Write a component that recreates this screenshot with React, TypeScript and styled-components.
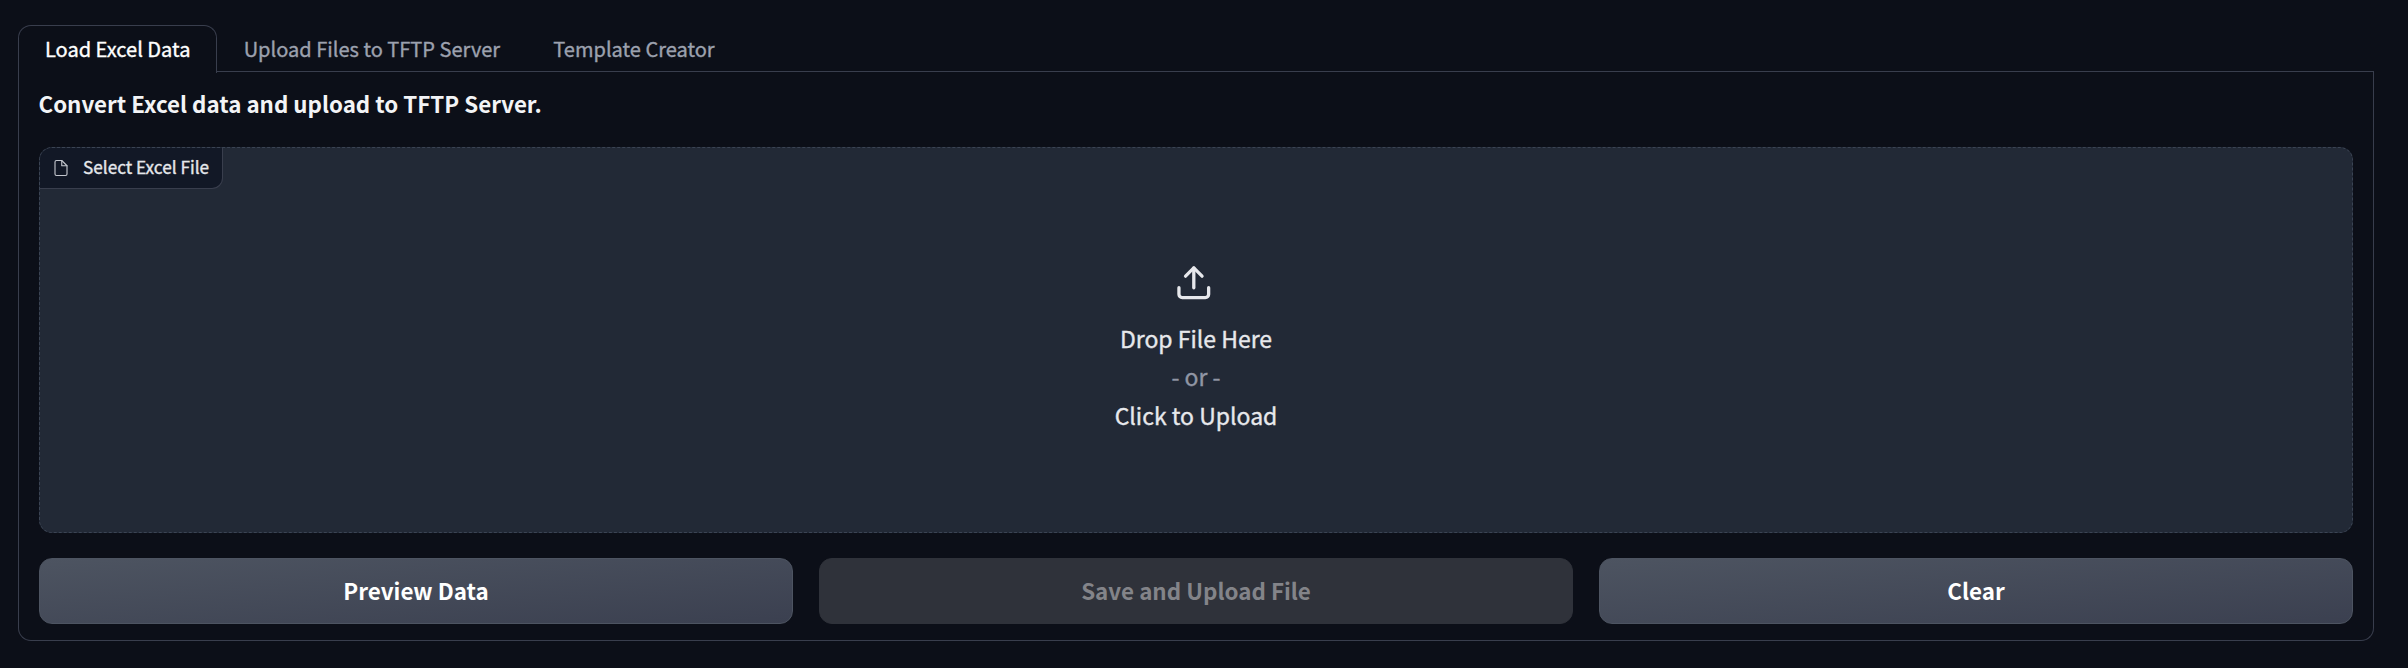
import React from "react";
import styled, { createGlobalStyle } from "styled-components";

const line = "#393e4d";

const Global = createGlobalStyle`
  * { box-sizing: border-box; }
  body {
    margin: 0;
    background: #0c0f18;
    font-family: "Noto Sans CJK SC", "Noto Sans", sans-serif;
    color: #f3f4f6;
  }
`;

const Page = styled.main`
  padding: 25px 34px 27px 18px;
  height: 668px;
  display: flex;
  flex-direction: column;
`;

const TabBar = styled.nav`
  display: flex;
  height: 47px;
  flex: none;
  border-bottom: 1px solid ${line};
`;

const Tab = styled.button<{ $active?: boolean }>`
  height: ${(p) => (p.$active ? 48 : 46)}px;
  padding: ${(p) => (p.$active ? "0 26px 2px" : "0 26px 0 25.2px")};
  border: 1px solid ${(p) => (p.$active ? line : "transparent")};
  border-bottom: 0;
  border-radius: 13px 13px 0 0;
  background: ${(p) => (p.$active ? "#0c0f18" : "transparent")};
  color: ${(p) => (p.$active ? "#ffffff" : "#9ca1ae")};
  font: 400 20.05px/30px "Noto Sans CJK SC", sans-serif;
  -webkit-text-stroke: 0.35px currentColor;
  white-space: nowrap;
`;

const Panel = styled.section`
  flex: 1;
  display: flex;
  flex-direction: column;
  padding: 15px 20px 16px;
  border: 1px solid ${line};
  border-top: 0;
  border-radius: 0 0 13px 13px;
`;

const Heading = styled.h1`
  margin: 0 0 27px;
  height: 33px;
  font-size: 22.34px;
  line-height: 33px;
  font-weight: 700;
  text-indent: -0.5px;
`;

const DropZone = styled.div`
  height: 386px;
  flex: none;
  display: flex;
  flex-direction: column;
  align-items: center;
  border: 1px dashed #3b4454;
  border-radius: 13px;
  background: #222936;
  overflow: hidden;
`;

const Label = styled.label`
  align-self: flex-start;
  display: flex;
  align-items: center;
  height: 41px;
  padding: 0 13px 0 12px;
  border: solid ${line};
  border-width: 0 1px 1px 0;
  border-bottom-right-radius: 11px;
  background: #121826;
  color: #e5e7eb;
  font-size: 17.2px;
  line-height: 24px;
  -webkit-text-stroke: 0.35px currentColor;
`;

const LabelText = styled.span`
  margin-left: 13px;
  padding-bottom: 3px;
`;

const Prompt = styled.div`
  display: flex;
  flex-direction: column;
  align-items: center;
  margin-top: 74.4px;
  color: #e7e8ec;
  font-size: 23px;
  line-height: 38.5px;
  -webkit-text-stroke: 0.35px currentColor;
`;

const UploadIcon = styled.svg`
  margin: 0 5px 16px 0;
`;

const Or = styled.span`
  color: #9196a5;
`;

const Actions = styled.div`
  display: grid;
  grid-template-columns: repeat(3, 1fr);
  gap: 26px;
  margin-top: 25px;
`;

const Action = styled.button`
  height: 66px;
  padding: 0 0 2px;
  border: 1px solid #4d5461;
  border-radius: 13px;
  background: linear-gradient(to bottom right, #4d5461, #3b4050);
  color: #ffffff;
  font: 700 22.4px/34px "Noto Sans CJK SC", sans-serif;

  &:disabled {
    border-color: #2f323a;
    background: #2f323a;
    color: #838489;
  }
`;

export default function App() {
  return (
    <Page>
      <Global />
      <TabBar>
        <Tab $active>Load Excel Data</Tab>
        <Tab>Upload Files to TFTP Server</Tab>
        <Tab>Template Creator</Tab>
      </TabBar>
      <Panel>
        <Heading>Convert Excel data and upload to TFTP Server.</Heading>
        <DropZone>
          <Label>
            <svg width="18" height="18" viewBox="0 0 24 24" fill="none" stroke="#c4c7ce" strokeWidth="1.5" strokeLinecap="round" strokeLinejoin="round">
              <path d="M13 2H6a2 2 0 0 0-2 2v16a2 2 0 0 0 2 2h12a2 2 0 0 0 2-2V9z" />
              <path d="M13 2v7h7" />
            </svg>
            <LabelText>Select Excel File</LabelText>
          </Label>
          <Prompt>
            <UploadIcon width="39.6" height="39.6" viewBox="0 0 24 24" fill="none" stroke="currentColor" strokeWidth="2" strokeLinecap="round" strokeLinejoin="round">
              <path d="M21 15v4a2 2 0 0 1-2 2H5a2 2 0 0 1-2-2v-4" />
              <path d="M17 8l-5-5-5 5" />
              <path d="M12 3v12" />
            </UploadIcon>
            <span>Drop File Here</span>
            <Or>- or -</Or>
            <span>Click to Upload</span>
          </Prompt>
        </DropZone>
        <Actions>
          <Action>Preview Data</Action>
          <Action disabled>Save and Upload File</Action>
          <Action>Clear</Action>
        </Actions>
      </Panel>
    </Page>
  );
}
